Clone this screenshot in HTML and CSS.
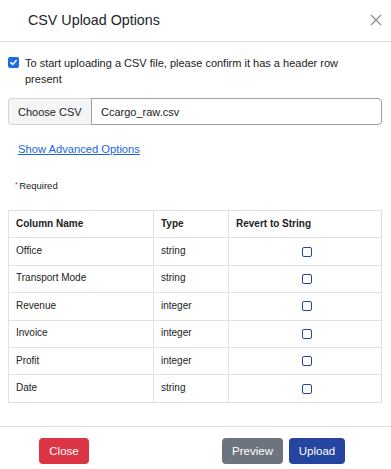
FILE: index.html
```html
<!DOCTYPE html>
<html>
<head>
<meta charset="utf-8">
<link rel="stylesheet" href="styles.css">
</head>
<body>
<div class="modal">
  <div class="modal-header">
    <h5 class="modal-title">CSV Upload Options</h5>
    <span class="close-x"><svg width="12" height="12" viewBox="0 0 12 12"><path d="M1 1L11 11M11 1L1 11" stroke="#8a8a8a" stroke-width="1.2" fill="none"/></svg></span>
  </div>
  <div class="modal-body">
    <label class="confirm">
      <span class="check"><svg width="11" height="11" viewBox="0 0 11 11"><rect x="0" y="0" width="11" height="11" rx="2" fill="#1d6ce0"/><path d="M2.8 5.6L4.7 7.4L8.2 3.6" stroke="#fff" stroke-width="1.5" fill="none" stroke-linecap="round" stroke-linejoin="round"/></svg></span>
      <span class="confirm-text">To start uploading a CSV file, please confirm it has a header row present</span>
    </label>
    <div class="input-group">
      <span class="addon">Choose CSV</span>
      <span class="file-input">Ccargo_raw.csv</span>
    </div>
    <a class="adv-link" href="#">Show Advanced Options</a>
    <div class="required"><span class="star">*</span>Required</div>
    <table class="cols">
      <thead>
        <tr><th class="c1">Column Name</th><th class="c2">Type</th><th class="c3">Revert to String</th></tr>
      </thead>
      <tbody>
        <tr><td>Office</td><td>string</td><td class="cb"><span class="box"></span></td></tr>
        <tr><td>Transport Mode</td><td>string</td><td class="cb"><span class="box"></span></td></tr>
        <tr><td>Revenue</td><td>integer</td><td class="cb"><span class="box"></span></td></tr>
        <tr><td>Invoice</td><td>integer</td><td class="cb"><span class="box"></span></td></tr>
        <tr><td>Profit</td><td>integer</td><td class="cb"><span class="box"></span></td></tr>
        <tr><td>Date</td><td>string</td><td class="cb"><span class="box"></span></td></tr>
      </tbody>
    </table>
  </div>
  <div class="modal-footer">
    <button class="btn btn-red">Close</button>
    <div class="right">
      <button class="btn btn-gray">Preview</button>
      <button class="btn btn-blue">Upload</button>
    </div>
  </div>
</div>
</body>
</html>
```

FILE: styles.css
```css
* { box-sizing: border-box; }
html, body { margin: 0; padding: 0; background: #fff; }
body { font-family: "Liberation Sans", Arial, sans-serif; color: #212529; width: 391px; height: 469px; overflow: hidden; }
.modal { width: 391px; }
.modal-header {
  height: 42px;
  border-bottom: 1px solid #dee2e6;
  display: flex;
  align-items: center;
  justify-content: space-between;
  padding: 0 8px 0 28px;
}
.modal-title { margin: 0; font-size: 14.3px; font-weight: normal; color: #212529; padding-bottom: 2px; }
.close-x { display: flex; width: 12px; height: 12px; margin-right: 1px; margin-top: -1px; }
.modal-body { padding: 13px 9px 0 8px; }
.confirm { display: flex; align-items: flex-start; font-size: 11px; line-height: 16px; color: #222; }
.check { display: flex; margin-top: 2px; width: 11px; height: 11px; flex: none; }
.confirm-text { margin-left: 6px; max-width: 330px; }
.input-group {
  margin-top: 11px;
  display: flex;
  height: 27px;
  font-size: 11px;
}
.addon {
  display: flex; align-items: center;
  width: 83px;
  padding-left: 9px;
  background: #f4f5f7;
  border: 1px solid #ced4da;
  border-right: none;
  border-radius: 4px 0 0 4px;
  color: #222;
}
.file-input {
  flex: 1;
  display: flex; align-items: center;
  padding-left: 9px;
  border: 1px solid #9aa0a6;
  border-radius: 0 4px 4px 0;
  color: #222;
}
.adv-link {
  display: block;
  margin: 16px 0 0 10px;
  font-size: 11.2px;
  line-height: 16px;
  color: #1a66e0;
  text-decoration: underline;
  width: max-content;
}
.required { margin: 22px 0 0 7px; font-size: 9.5px; line-height: 12px; color: #222; }
.star { color: #dc3545; font-size: 8px; vertical-align: 2px; margin-right: 1px; }
table.cols {
  margin-top: 18px;
  width: 374px;
  border-collapse: collapse;
  font-size: 10px;
  color: #222;
}
table.cols th, table.cols td {
  border: 1px solid #dee2e6;
  height: 27.4px;
  padding: 0 0 2px 7px;
  text-align: left;
  vertical-align: middle;
}
table.cols th { font-weight: bold; }
th.c1 { width: 145px; }
th.c2 { width: 75px; }
table.cols td.cb { text-align: center; padding: 2px 0 0 0; }
.box {
  display: inline-block;
  width: 10px; height: 10px;
  border: 1.3px solid #2545a0;
  border-radius: 2px;
  margin-left: 3px;
}
.modal-footer {
  margin-top: 23px;
  border-top: 1px solid #dee2e6;
  height: 46px;
  display: flex;
  align-items: center;
  padding: 0 46px 0 39px;
  justify-content: space-between;
}
.right { display: flex; gap: 6px; }
.btn {
  height: 26px;
  border: none;
  border-radius: 4px;
  color: #fff;
  font-family: "Liberation Sans", Arial, sans-serif;
  font-size: 11.5px;
  padding: 0;
  margin-top: 3px;
}
.btn-red { background: #dc3545; width: 50px; }
.btn-gray { background: #6c757d; width: 61px; }
.btn-blue { background: #2545a0; width: 56px; }
```
